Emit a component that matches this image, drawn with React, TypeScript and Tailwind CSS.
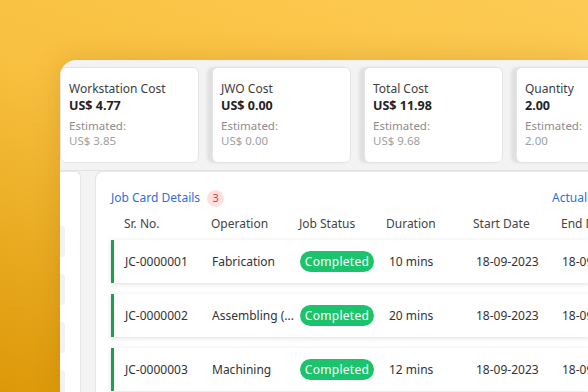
const cards = [
  { label: 'Workstation Cost', value: 'US$ 4.77', est: 'US$ 3.85' },
  { label: 'JWO Cost', value: 'US$ 0.00', est: 'US$ 0.00' },
  { label: 'Total Cost', value: 'US$ 11.98', est: 'US$ 9.68' },
  { label: 'Quantity', value: '2.00', est: '2.00' },
]

const rows = [
  { id: 'JC-0000001', op: 'Fabrication', dur: '10 mins' },
  { id: 'JC-0000002', op: 'Assembling (...', dur: '20 mins' },
  { id: 'JC-0000003', op: 'Machining', dur: '12 mins' },
]

const cols = 'grid grid-cols-[87px_88px_87px_87px_88px_87px] items-center'

export default function App() {
  return (
    <div
      className="w-[588px] h-[392px] overflow-hidden flex pl-[60px] pt-[60px] bg-[linear-gradient(200deg,#fdcb54_0%,#f8c03f_45%,#dc9808_100%)]"
      style={{ fontFamily: '"Noto Sans", "Open Sans", sans-serif' }}
    >
      <div className="flex-1 min-w-0 flex flex-col rounded-tl-2xl bg-[#f3f3f3] overflow-hidden shadow-[0_0_28px_rgba(120,70,0,0.18)]">
        {/* summary cards */}
        <div className="flex gap-[13px] pt-[7px] pb-[7px] border-b border-[#e2e2e2]">
          {cards.map((c, i) => (
            <div
              key={c.label}
              className={`w-[139px] h-[96px] shrink-0 bg-white rounded-md border border-[#e4e4e4] pl-[8px] pt-[13px] ${
                i > 0 ? 'shadow-[-5px_0_3px_rgba(0,0,0,0.08)]' : ''
              }`}
            >
              <div className="text-[12px] leading-[16px] text-[#3d3d3d]">{c.label}</div>
              <div className="text-[12.5px] leading-[18px] font-bold text-[#222]">{c.value}</div>
              <div className="mt-[3px] text-[11.5px] leading-[15px] text-[#8c8c8c]">Estimated:</div>
              <div className="text-[11.5px] leading-[15px] text-[#a0a0a0]">{c.est}</div>
            </div>
          ))}
        </div>

        {/* lower area */}
        <div className="flex-1 min-h-0 flex gap-[14px]">
          <div className="w-[21px] shrink-0 bg-white rounded-tr-md border-r border-t border-[#e6e6e6] flex flex-col gap-[17px] pt-[54px]">
            {[0, 1, 2, 3].map((n) => (
              <div key={n} className="w-[5px] h-[31px] shrink-0 bg-[#f2f2f2] rounded-r-sm" />
            ))}
          </div>

          <div className="flex-1 min-w-0 bg-white rounded-tl-lg border-l border-t border-[#e6e6e6] pl-[15px] pt-[17px]">
            <div className="flex items-center h-[18px]">
              <span className="text-[12px] text-[#2f6fdc]">Job Card Details</span>
              <span className="ml-[7px] w-[17px] h-[17px] rounded-full bg-[#fde1e1] text-[#e03b3f] text-[11px] flex items-center justify-center">
                3
              </span>
              <span className="ml-auto text-[12px] text-[#2f6fdc] w-[36px] overflow-hidden whitespace-nowrap">
                Actual
              </span>
            </div>

            <div className={`${cols} pl-[13px] mt-[7px] h-[20px] text-[12px] text-[#444] whitespace-nowrap`}>
              <span>Sr. No.</span>
              <span>Operation</span>
              <span>Job Status</span>
              <span>Duration</span>
              <span>Start Date</span>
              <span>End Date</span>
            </div>

            <div className="mt-[6px] flex flex-col gap-[11px]">
              {rows.map((r) => (
                <div
                  key={r.id}
                  className={`${cols} h-[43px] shrink-0 pl-[11px] bg-white border-l-[3px] border-[#16a34a] shadow-[0_1px_5px_rgba(0,0,0,0.13)] text-[12px] text-[#333] whitespace-nowrap`}
                >
                  <span>{r.id}</span>
                  <span className="overflow-hidden">{r.op}</span>
                  <span>
                    <span className="inline-flex items-center justify-center w-[74px] h-[21px] rounded-full bg-[#1cc36d] text-white text-[12px] tracking-[0.3px]">
                      Completed
                    </span>
                  </span>
                  <span className="pl-[2px]">{r.dur}</span>
                  <span className="pl-[2px]">18-09-2023</span>
                  <span>18-09-2023</span>
                </div>
              ))}
            </div>
          </div>
        </div>
      </div>
    </div>
  )
}
